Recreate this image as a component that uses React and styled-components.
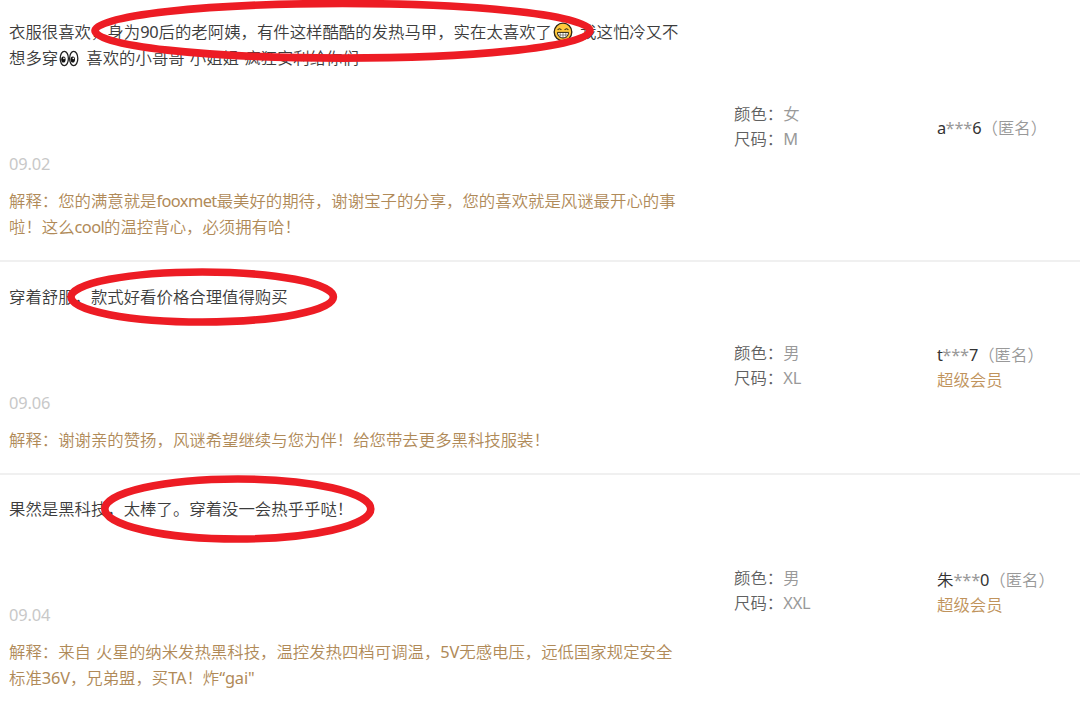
import React from "react";
import styled, { createGlobalStyle } from "styled-components";

const reviews = [
  {
    comment: [
      ["衣服很喜欢，身为90后的老阿姨，有件这样酷酷的发热马甲，实在太喜欢了", "grin", " 我这怕冷又不"],
      ["想多穿", "eyes", " 喜欢的小哥哥 小姐姐 疯狂安利给你们"],
    ],
    date: "09.02",
    reply: [
      "解释：您的满意就是fooxmet最美好的期待，谢谢宝子的分享，您的喜欢就是风谜最开心的事",
      "啦！这么cool的温控背心，必须拥有哈！",
    ],
    color: "女",
    size: "M",
    user: ["a", "6"],
  },
  {
    comment: [["穿着舒服，款式好看价格合理值得购买"]],
    date: "09.06",
    reply: ["解释：谢谢亲的赞扬，风谜希望继续与您为伴！给您带去更多黑科技服装！"],
    color: "男",
    size: "XL",
    user: ["t", "7"],
    level: "超级会员",
  },
  {
    comment: [["果然是黑科技，太棒了。穿着没一会热乎乎哒！"]],
    date: "09.04",
    reply: [
      "解释：来自 火星的纳米发热黑科技，温控发热四档可调温，5V无感电压，远低国家规定安全",
      "标准36V，兄弟盟，买TA！炸“gai\"",
    ],
    color: "男",
    size: "XXL",
    user: ["朱", "0"],
    level: "超级会员",
  },
];

const marks = [
  { cx: 342.5, cy: 30.8, rx: 247.5, ry: 27.3 },
  { cx: 202.2, cy: 297, rx: 131.2, ry: 25 },
  { cx: 237.8, cy: 509, rx: 133, ry: 30 },
];

const Grin = () => (
  <Emoji viewBox="0 0 20 20">
    <circle cx="10" cy="10" r="8.8" fill="#ffc83d" stroke="#2b2414" strokeWidth="1.3" />
    <path d="M4.6 8q1.9-2.6 3.8 0M11.6 8q1.9-2.6 3.8 0" fill="none" stroke="#2b2414" strokeWidth="1.1" />
    <path d="M4.4 10.4h11.2q-.4 5.6-5.6 5.6t-5.6-5.6z" fill="#fff" stroke="#2b2414" strokeWidth="1" />
    <path d="M5 13h10M7.2 10.5v5M10 10.5v5.6M12.8 10.5v5" stroke="#2b2414" strokeWidth=".5" />
  </Emoji>
);

const Eyes = () => (
  <Emoji viewBox="0 0 20 20">
    <ellipse cx="5.3" cy="10.5" rx="4.1" ry="7.2" fill="#fff" stroke="#222" strokeWidth="1.3" />
    <ellipse cx="14.7" cy="10.5" rx="4.1" ry="7.2" fill="#fff" stroke="#222" strokeWidth="1.3" />
    <ellipse cx="4.4" cy="11.5" rx="2.2" ry="3.1" fill="#111" />
    <ellipse cx="13.8" cy="11.5" rx="2.2" ry="3.1" fill="#111" />
    <circle cx="4.9" cy="10.4" r=".8" fill="#fff" />
    <circle cx="14.3" cy="10.4" r=".8" fill="#fff" />
  </Emoji>
);

// latin letters and digits are set heavier and tighter than the chinese text
const mixed = (text) =>
  text.split(/([\w.*“"]+)/).map((s, i) =>
    i % 2 ? (
      <Latin key={i} $word={/^[a-z]+$/.test(s)}>
        {s}
      </Latin>
    ) : (
      s
    )
  );

const renderPart = (part, i) => {
  if (part === "grin") return <Grin key={i} />;
  if (part === "eyes") return <Eyes key={i} />;
  return <span key={i}>{mixed(part)}</span>;
};

const Review = ({ data }) => (
  <Row>
    <Body>
      <Comment>
        {data.comment.map((line, i) => (
          <Line key={i}>{line.map(renderPart)}</Line>
        ))}
      </Comment>
      <DateText>{mixed(data.date)}</DateText>
      <Reply>
        {data.reply.map((line) => (
          <Line key={line}>{mixed(line)}</Line>
        ))}
      </Reply>
    </Body>
    <Meta>
      <div>
        颜色：<Value>{data.color}</Value>
      </div>
      <div>
        尺码：<Value>{mixed(data.size)}</Value>
      </div>
    </Meta>
    <User>
      <div>
        {mixed(data.user[0])}
        <Value>{mixed("***")}</Value>
        {mixed(data.user[1])}
        <Value>（匿名）</Value>
      </div>
      {data.level && <Level>{data.level}</Level>}
    </User>
  </Row>
);

const App = () => (
  <Page>
    <GlobalStyle />
    {reviews.map((review) => (
      <Review key={review.date} data={review} />
    ))}
    <Marks viewBox="0 0 1080 712">
      {marks.map((m) => (
        <ellipse key={m.cy} {...m} fill="none" stroke="#ed1c24" strokeWidth="7.6" />
      ))}
    </Marks>
  </Page>
);

const GlobalStyle = createGlobalStyle`
  body {
    margin: 0;
    background: #fff;
    overflow: hidden;
  }
`;
const Page = styled.div`
  position: relative;
  width: 1080px;
  height: 712px;
  overflow: hidden;
  font-family: "Noto Sans", "Noto Sans CJK SC", sans-serif;
  font-size: 16.4px;
  font-weight: 350;
  word-spacing: 0.9px;
  white-space: pre;
`;
const Row = styled.div`
  display: grid;
  grid-template-columns: 725px 203px 1fr;
  align-items: center;
  padding: 22px 0 20px 9px;
  border-bottom: 2px solid #f0f0f0;

  &:first-child {
    padding-top: 19px;
  }
  &:nth-child(3) {
    padding-top: 21px;
    border-bottom: 0;
  }
`;
const Body = styled.div`
  display: flex;
  flex-direction: column;
`;
const Line = styled.div`
  height: 26px;
  line-height: 26px;
`;
const Comment = styled.div`
  color: #3c3c3c;
`;
const DateText = styled(Line)`
  margin: 80px 0 11px;
  color: #c8c8c8;
`;
const Reply = styled.div`
  color: #b08a58;
`;
const Latin = styled.span`
  font-weight: 400;
  letter-spacing: ${(props) => (props.$word ? "-0.6px" : "-0.15px")};
`;
const Meta = styled.div`
  line-height: 25px;
  padding-bottom: 7px;
  color: #606060;
`;
const Value = styled.span`
  color: #999;
`;
const User = styled.div`
  line-height: 25px;
  padding-bottom: 4px;
  color: #333;
`;
const Level = styled.div`
  color: #c0935c;
`;
const Emoji = styled.svg`
  width: 20px;
  height: 20px;
  margin: 0 2px 0 1px;
  vertical-align: -4px;
`;
const Marks = styled.svg`
  position: absolute;
  top: 0;
  left: 0;
  width: 1080px;
  height: 712px;
  pointer-events: none;
`;

export default App;
